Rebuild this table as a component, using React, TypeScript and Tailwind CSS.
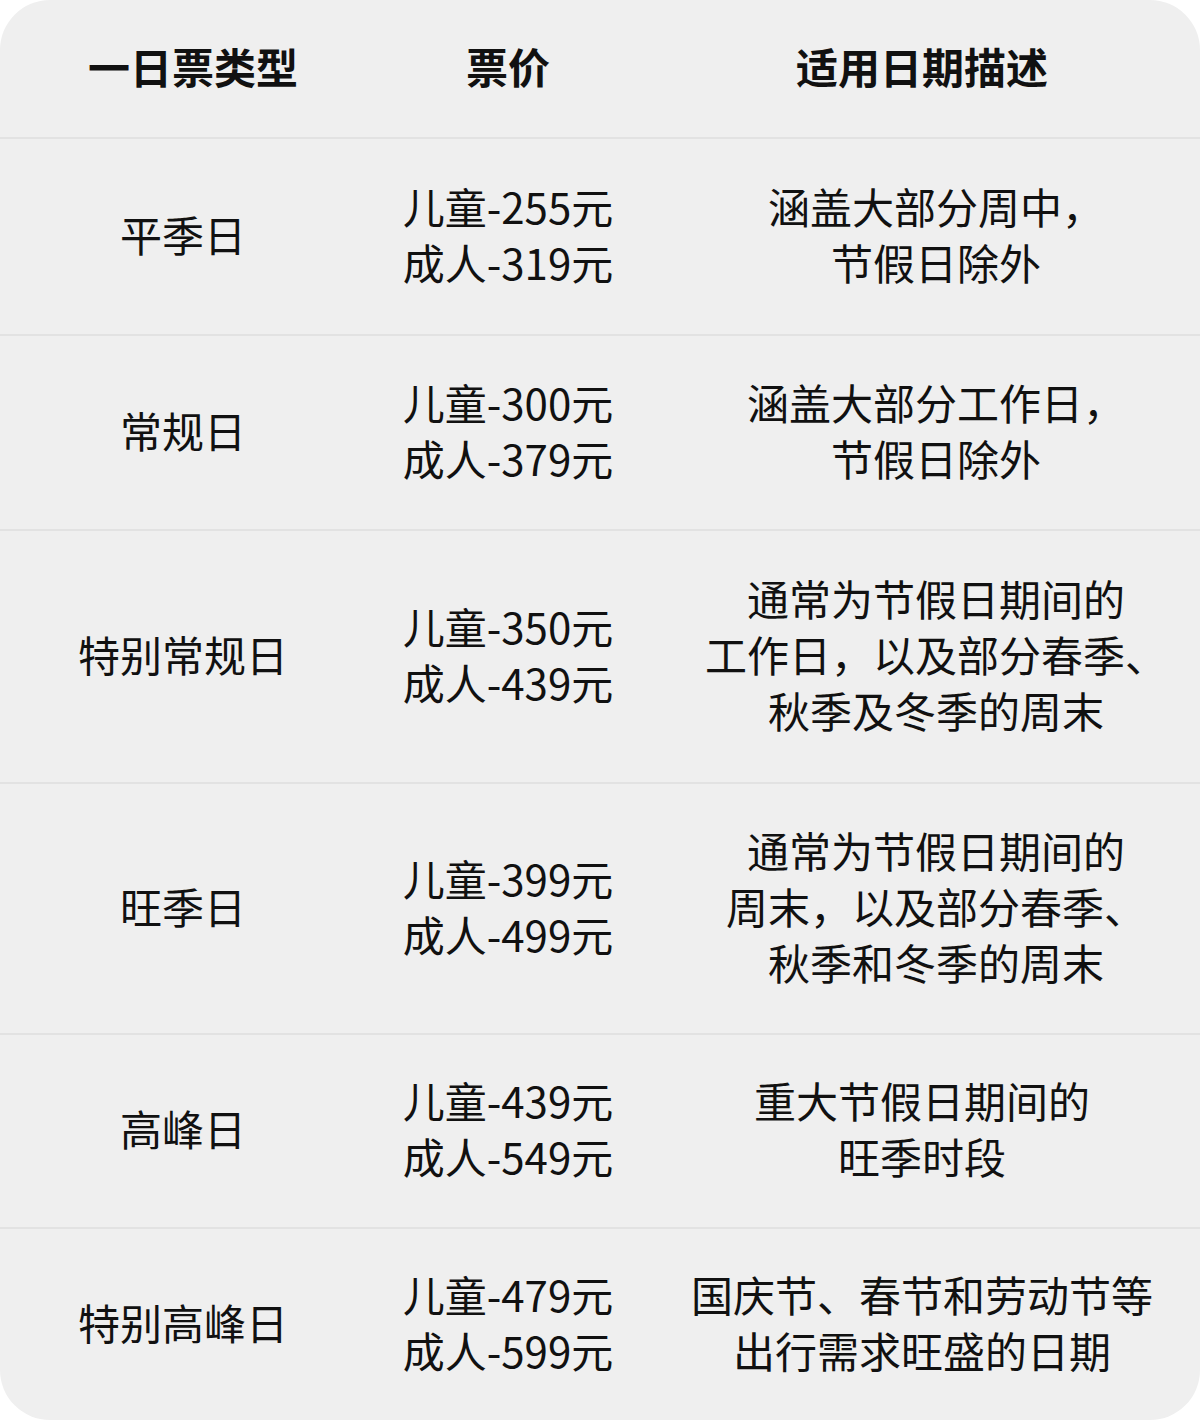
const rows = [
  { type: "平季日", kid: "255", adult: "319", desc: ["涵盖大部分周中，", "节假日除外"], h: "h-[197px]", shift: true },
  { type: "常规日", kid: "300", adult: "379", desc: ["涵盖大部分工作日，", "节假日除外"], h: "h-[195px]", shift: true },
  { type: "特别常规日", kid: "350", adult: "439", desc: ["通常为节假日期间的", "工作日，以及部分春季、", "秋季及冬季的周末"], h: "h-[253px]", shift: true },
  { type: "旺季日", kid: "399", adult: "499", desc: ["通常为节假日期间的", "周末，以及部分春季、", "秋季和冬季的周末"], h: "h-[251px]", shift: true },
  { type: "高峰日", kid: "439", adult: "549", desc: ["重大节假日期间的", "旺季时段"], h: "h-[194px]", shift: false },
  { type: "特别高峰日", kid: "479", adult: "599", desc: ["国庆节、春节和劳动节等", "出行需求旺盛的日期"], h: "h-[193px]", shift: false },
];

const App = () => {
  return (
    <div className="w-[1200px] h-[1420px] bg-white font-['Noto_Sans_CJK_SC',sans-serif] text-[#111]">
      <div className="h-full rounded-[50px] bg-[#efefef] overflow-hidden">
        {/* Header */}
        <div className="grid grid-cols-[366px_284px_1fr] h-[137px] items-center pb-[6px] text-[42px] font-bold leading-[56px]">
          <div className="text-center pl-[20px]">一日票类型</div>
          <div className="text-center">票价</div>
          <div className="text-center pr-[6px]">适用日期描述</div>
        </div>

        {rows.map((r) => (
          <div
            key={r.type}
            className={`grid grid-cols-[366px_284px_1fr] ${r.h} items-center pb-[6px] border-t-2 border-[#e2e2e2] text-[42px] leading-[56px]`}
          >
            <div className="text-center">{r.type}</div>
            <div className="text-center">
              <div className="inline-block text-left">
                <div>儿童-{r.kid}元</div>
                <div>成人-{r.adult}元</div>
              </div>
            </div>
            <div className={`text-center ${r.shift ? "pl-[22px]" : "pr-[6px]"}`}>
              {r.desc.map((line) => (
                <div key={line}>{line}</div>
              ))}
            </div>
          </div>
        ))}
      </div>
    </div>
  );
};

export default App;
